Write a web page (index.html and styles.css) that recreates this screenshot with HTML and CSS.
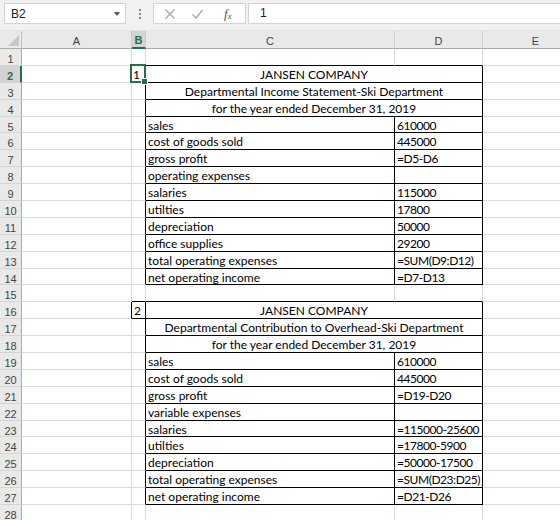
FILE: index.html
```html
<!DOCTYPE html>
<html>
<head>
<meta charset="utf-8">
<link rel="stylesheet" href="styles.css">
</head>
<body>
<div class="app">
  <div class="toolbar">
    <div class="namebox"><span>B2</span><span class="arrow"></span></div>
    <div class="dots"><i></i><i></i><i></i></div>
    <div class="fbtns">
      <svg class="ic" width="12" height="12" viewBox="0 0 12 12"><path d="M1.5 1.5L10.5 10.5M10.5 1.5L1.5 10.5" stroke="#a6a6a6" stroke-width="1.2" fill="none"/></svg>
      <svg class="ic" width="13" height="12" viewBox="0 0 13 12"><path d="M1.5 6.5L5 10L11.5 2" stroke="#a6a6a6" stroke-width="1.4" fill="none"/></svg>
      <span class="fx"><i>f</i><sub>x</sub></span>
    </div>
    <div class="finput">1</div>
  </div>
  <div class="sheet">
    <div class="corner"><span class="tri"></span></div>
    <div class="ch">A</div><div class="ch csel">B</div><div class="ch">C</div><div class="ch">D</div><div class="ch">E</div>

    <div class="rh">1</div><div class="c"></div><div class="c bb"></div><div class="c bb"></div><div class="c bb"></div><div class="c"></div>
    <div class="rh rsel">2</div><div class="c br"></div><div class="c br bb sel">1<span class="selbox"><span class="handle"></span></span></div><div class="c sp br bb">JANSEN COMPANY</div><div class="c"></div>
    <div class="rh">3</div><div class="c"></div><div class="c br"></div><div class="c sp br bb">Departmental Income Statement-Ski Department</div><div class="c"></div>
    <div class="rh">4</div><div class="c"></div><div class="c br"></div><div class="c sp br bb">for the year ended December 31, 2019</div><div class="c"></div>
    <div class="rh">5</div><div class="c"></div><div class="c br"></div><div class="c br bb">sales</div><div class="c n br bb">610000</div><div class="c"></div>
    <div class="rh">6</div><div class="c"></div><div class="c br"></div><div class="c br bb">cost of goods sold</div><div class="c n br bb">445000</div><div class="c"></div>
    <div class="rh">7</div><div class="c"></div><div class="c br"></div><div class="c br bb">gross profit</div><div class="c n br bb">=D5-D6</div><div class="c"></div>
    <div class="rh">8</div><div class="c"></div><div class="c br"></div><div class="c br bb">operating expenses</div><div class="c n br bb"></div><div class="c"></div>
    <div class="rh">9</div><div class="c"></div><div class="c br"></div><div class="c br bb">salaries</div><div class="c n br bb">115000</div><div class="c"></div>
    <div class="rh">10</div><div class="c"></div><div class="c br"></div><div class="c br bb">utilties</div><div class="c n br bb">17800</div><div class="c"></div>
    <div class="rh">11</div><div class="c"></div><div class="c br"></div><div class="c br bb">depreciation</div><div class="c n br bb">50000</div><div class="c"></div>
    <div class="rh">12</div><div class="c"></div><div class="c br"></div><div class="c br bb">office supplies</div><div class="c n br bb">29200</div><div class="c"></div>
    <div class="rh">13</div><div class="c"></div><div class="c br"></div><div class="c br bb">total operating expenses</div><div class="c n br bb">=SUM(D9:D12)</div><div class="c"></div>
    <div class="rh">14</div><div class="c"></div><div class="c br"></div><div class="c br bb">net operating income</div><div class="c n br bb">=D7-D13</div><div class="c"></div>
    <div class="rh">15</div><div class="c"></div><div class="c bb"></div><div class="c bb"></div><div class="c bb"></div><div class="c"></div>
    <div class="rh">16</div><div class="c br"></div><div class="c br bb">2</div><div class="c sp br bb">JANSEN COMPANY</div><div class="c"></div>
    <div class="rh">17</div><div class="c"></div><div class="c br"></div><div class="c sp br bb">Departmental Contribution to Overhead-Ski Department</div><div class="c"></div>
    <div class="rh">18</div><div class="c"></div><div class="c br"></div><div class="c sp br bb">for the year ended December 31, 2019</div><div class="c"></div>
    <div class="rh">19</div><div class="c"></div><div class="c br"></div><div class="c br bb">sales</div><div class="c n br bb">610000</div><div class="c"></div>
    <div class="rh">20</div><div class="c"></div><div class="c br"></div><div class="c br bb">cost of goods sold</div><div class="c n br bb">445000</div><div class="c"></div>
    <div class="rh">21</div><div class="c"></div><div class="c br"></div><div class="c br bb">gross profit</div><div class="c n br bb">=D19-D20</div><div class="c"></div>
    <div class="rh">22</div><div class="c"></div><div class="c br"></div><div class="c br bb">variable expenses</div><div class="c n br bb"></div><div class="c"></div>
    <div class="rh">23</div><div class="c"></div><div class="c br"></div><div class="c br bb">salaries</div><div class="c n br bb">=115000-25600</div><div class="c"></div>
    <div class="rh">24</div><div class="c"></div><div class="c br"></div><div class="c br bb">utilties</div><div class="c n br bb">=17800-5900</div><div class="c"></div>
    <div class="rh">25</div><div class="c"></div><div class="c br"></div><div class="c br bb">depreciation</div><div class="c n br bb">=50000-17500</div><div class="c"></div>
    <div class="rh">26</div><div class="c"></div><div class="c br"></div><div class="c br bb">total operating expenses</div><div class="c n br bb">=SUM(D23:D25)</div><div class="c"></div>
    <div class="rh">27</div><div class="c"></div><div class="c br"></div><div class="c br bb">net operating income</div><div class="c n br bb">=D21-D26</div><div class="c"></div>
    <div class="rh">28</div><div class="c"></div><div class="c"></div><div class="c"></div><div class="c"></div><div class="c"></div>
  </div>
</div>
</body>
</html>
```

FILE: styles.css
```css
html, body {
  margin: 0;
  padding: 0;
  background: #ffffff;
}
body {
  width: 560px;
  height: 520px;
  overflow: hidden;
  font-family: Lato, "Liberation Sans", sans-serif;
  color: #000;
}
.app {
  width: 560px;
  overflow: hidden;
}
.toolbar {
  height: 31px;
  box-sizing: border-box;
  background: #f1f1f1;
  display: flex;
  align-items: flex-start;
  padding: 3px 0 0 4px;
  border-bottom: 1px solid #e2e2e2;
}
.namebox {
  width: 122px;
  height: 21px;
  box-sizing: border-box;
  background: #fff;
  border: 1px solid #d4d4d4;
  display: flex;
  align-items: center;
  justify-content: space-between;
  padding: 0 4px 0 6px;
  font-family: "Liberation Sans", sans-serif;
  font-size: 12px;
  color: #222;
}
.arrow {
  width: 0;
  height: 0;
  border-left: 3.5px solid transparent;
  border-right: 3.5px solid transparent;
  border-top: 4px solid #555;
  margin-right: 1px;
}
.dots {
  width: 27px;
  height: 21px;
  display: flex;
  flex-direction: column;
  align-items: center;
  justify-content: center;
  gap: 2px;
}
.dots i {
  display: block;
  width: 2px;
  height: 2px;
  background: #8a8a8a;
}
.fbtns {
  width: 93px;
  height: 21px;
  box-sizing: border-box;
  background: #fff;
  border: 1px solid #d4d4d4;
  display: flex;
  align-items: center;
  padding-left: 10px;
  gap: 15px;
}
.ic {
  display: block;
}
.fx {
  font-family: "Liberation Serif", serif;
  font-size: 13px;
  color: #555;
  margin-left: 5px;
}
.fx sub {
  font-size: 9px;
  font-style: italic;
  vertical-align: -1px;
}
.finput {
  flex: 1;
  height: 21px;
  box-sizing: border-box;
  background: #fff;
  border: 1px solid #d4d4d4;
  border-right: none;
  margin-left: 2px;
  padding-left: 11px;
  font-family: "Liberation Sans", sans-serif;
  font-size: 12px;
  line-height: 19px;
  color: #222;
}
.sheet {
  display: grid;
  grid-template-columns: 22px 110px 14px 249px 88px 106px;
  grid-template-rows: 18px;
  grid-auto-rows: 16.9px;
  width: 589px;
}
.corner, .ch, .rh {
  background: #e9e9e9;
  box-sizing: border-box;
  font-family: "Liberation Sans", sans-serif;
  font-size: 11px;
  color: #444;
  display: flex;
  align-items: center;
  justify-content: center;
}
.corner {
  border-right: 1px solid #c4c4c4;
  border-bottom: 1px solid #ababab;
  position: relative;
}
.tri {
  position: absolute;
  right: 2px;
  bottom: 2px;
  width: 0;
  height: 0;
  border-left: 11px solid transparent;
  border-bottom: 11px solid #c8c8c8;
}
.ch {
  border-right: 1px solid #cbcbcb;
  border-bottom: 1px solid #ababab;
  padding-top: 2px;
}
.ch.csel {
  background: #d3d3d3;
  color: #217346;
  font-weight: bold;
  border-bottom: 2px solid #217346;
}
.rh {
  border-right: 1px solid #ababab;
  border-bottom: 1px solid #d5d5d5;
  font-size: 11px;
  padding-top: 4px;
}
.rh.rsel {
  background: #d3d3d3;
  color: #217346;
  font-weight: bold;
  border-right: 2px solid #217346;
}
.c {
  box-sizing: border-box;
  border-right: 1px solid #dadada;
  border-bottom: 1px solid #dadada;
  font-size: 12px;
  line-height: 14px;
  padding: 2px 2px 0;
  white-space: nowrap;
  overflow: hidden;
}
.c.n {
  letter-spacing: -0.45px;
}
.c.br {
  border-right-color: #000;
}
.c.bb {
  border-bottom-color: #000;
}
.c.sp {
  grid-column: span 2;
  text-align: center;
}
.c.sel {
  position: relative;
  overflow: visible;
  padding-left: 1px;
}
.selbox {
  position: absolute;
  left: -2px;
  top: -2px;
  right: -1px;
  bottom: -1px;
  border: 2px solid #217346;
}
.handle {
  position: absolute;
  right: -4px;
  bottom: -4px;
  width: 5px;
  height: 5px;
  background: #217346;
  border: 1px solid #fff;
}
```
